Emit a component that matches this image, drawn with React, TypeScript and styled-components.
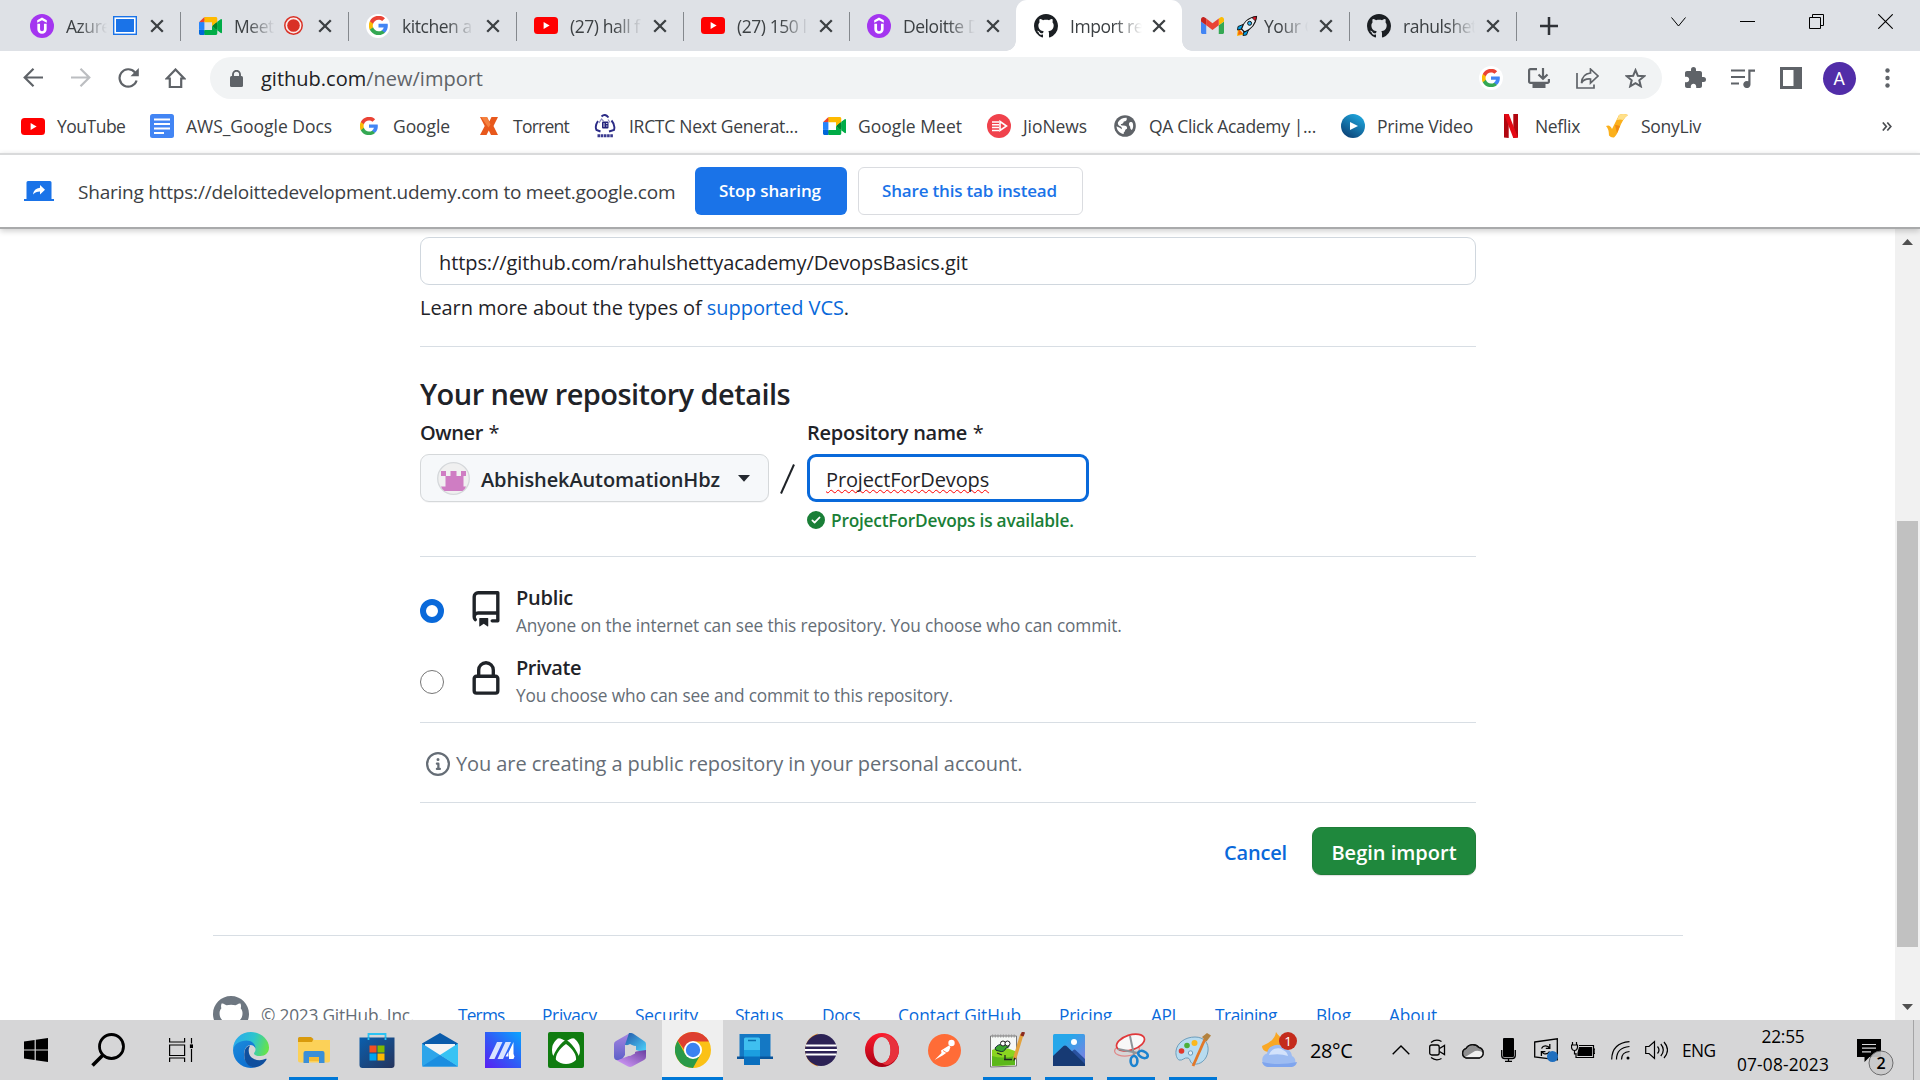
import React from "react";
import styled, { createGlobalStyle, css } from "styled-components";

const GlobalStyle = createGlobalStyle`
  *, *::before, *::after { box-sizing: border-box; }
  body {
    margin: 0;
    background: #fff;
    overflow: hidden;
    font-family: "Open Sans", "Noto Sans", sans-serif;
    color: #1f2328;
  }
  svg { display: block; flex: none; }
`;

/* ---------- shared ---------- */

const Screen = styled.div`
  width: 1920px;
  height: 1080px;
  display: flex;
  flex-direction: column;
  overflow: hidden;
`;

const Label = styled.span<{ $ls?: number }>`
  white-space: nowrap;
  letter-spacing: ${(p) => p.$ls ?? 0}px;
`;

/* ---------- brand glyphs ---------- */

type IconProps = { w?: number; h?: number };

const Udemy = ({ w = 24, h = 24 }: IconProps) => (
  <svg width={w} height={h} viewBox="0 0 24 24">
    <circle cx="12" cy="12" r="12" fill="#a435f0" />
    <path d="M7.200 6.300 12 3.500l4.800 2.800v2.500L12 6.200 7.200 8.800z" fill="#fff" />
    <path d="M8.700 9.800v5.400a3.300 3.300 0 0 0 6.600 0V9.800" fill="none" stroke="#fff" strokeWidth="2.700" />
  </svg>
);

const Meet = ({ w = 23, h = 18 }: IconProps) => (
  <svg width={w} height={h} viewBox="0 0 87.5 72" preserveAspectRatio="none">
    <path fill="#00832d" d="M49.5 36l8.53 9.75 11.47 7.33 2-17.02-2-16.64-11.69 6.44z" />
    <path fill="#0066da" d="M0 51.5V66c0 3.315 2.685 6 6 6h14.5l3-10.96-3-9.54-9.95-3z" />
    <path fill="#e94235" d="M20.5 0L0 20.5l10.55 3 9.95-3 2.95-9.41z" />
    <path fill="#2684fc" d="M20.5 20.5H0v31h20.5z" />
    <path fill="#00ac47" d="M82.6 8.68L69.5 19.42v33.66l13.16 10.79c1.97 1.54 4.85.135 4.85-2.37V11c0-2.535-2.945-3.925-4.91-2.32zM49.5 36v15.5h-29V72h43c3.315 0 6-2.685 6-6V53.08z" />
    <path fill="#ffba00" d="M63.5 0h-43v20.5h29V36l20-16.57V6c0-3.315-2.685-6-6-6z" />
  </svg>
);

const GoogleG = ({ w = 18 }: IconProps) => (
  <svg width={w} height={w} viewBox="0 0 48 48">
    <path fill="#4285f4" d="M47.5 24.5c0-1.600-.1-3.200-.4-4.700H24v9.100h13.200c-.6 3-2.300 5.500-4.900 7.200v6h7.900c4.600-4.300 7.300-10.500 7.300-17.600z" />
    <path fill="#34a853" d="M24 48.500c6.600 0 12.200-2.200 16.200-5.900l-7.900-6.100c-2.200 1.500-5 2.300-8.300 2.300-6.400 0-11.800-4.300-13.700-10.100H2.100v6.300C6.200 43.100 14.400 48.500 24 48.500z" />
    <path fill="#fbbc05" d="M10.300 28.700c-.5-1.500-.8-3-.8-4.700s.3-3.200.8-4.700V13H2.100C.5 16.300-.4 20.100-.4 24s.9 7.700 2.500 11z" />
    <path fill="#ea4335" d="M24 9.200c3.600 0 6.800 1.200 9.400 3.700l7-7C36.200 1.900 30.600-.5 24-.5 14.400-.5 6.200 4.900 2.100 13l8.200 6.300C12.200 13.500 17.600 9.200 24 9.200z" />
  </svg>
);

const YouTube = () => (
  <svg width="24" height="17" viewBox="0 0 24 17">
    <rect width="24" height="17" rx="3.500" fill="#f00" />
    <path d="M9.600 5v7l6-3.500z" fill="#fff" />
  </svg>
);

const octocat =
  "M8 0c4.420 0 8 3.580 8 8a8.013 8.013 0 0 1-5.450 7.590c-.4.08-.55-.17-.55-.38 0-.27.01-1.130.01-2.200 0-.75-.25-1.230-.54-1.480 1.780-.2 3.650-.88 3.650-3.950 0-.88-.31-1.590-.82-2.150.08-.2.36-1.020-.08-2.120 0 0-.67-.22-2.200.82-.64-.18-1.320-.27-2-.27-.68 0-1.360.09-2 .27-1.530-1.030-2.200-.82-2.200-.82-.44 1.100-.16 1.920-.08 2.120-.51.56-.82 1.280-.82 2.150 0 3.060 1.860 3.750 3.640 3.950-.23.2-.44.55-.51 1.070-.46.21-1.610.55-2.330-.66-.15-.24-.6-.83-1.230-.82-.67.01-.27.38.01.53.34.19.73.9.82 1.130.16.45.68 1.310 2.690.94 0 .67.01 1.300.01 1.490 0 .21-.15.45-.55.38A7.995 7.995 0 0 1 0 8c0-4.420 3.580-8 8-8Z";

const GitHub = ({ w = 24, color = "#1b1f23" }: { w?: number; color?: string }) => (
  <svg width={w} height={w} viewBox="0 0 16 16">
    <path fill={color} d={octocat} />
  </svg>
);

const Gmail = () => (
  <svg width="23" height="17" viewBox="52 42 88 66" preserveAspectRatio="none">
    <path fill="#4285f4" d="M58 108h14V74L52 59v43c0 3.320 2.690 6 6 6" />
    <path fill="#34a853" d="M120 108h14c3.320 0 6-2.690 6-6V59l-20 15" />
    <path fill="#fbbc04" d="M120 48v26l20-15v-8c0-7.420-8.470-11.650-14.400-7.200" />
    <path fill="#ea4335" d="M72 74V48l24 18 24-18v26L96 92" />
    <path fill="#c5221f" d="M52 51v8l20 15V48l-5.600-4.200c-5.940-4.450-14.400-.22-14.400 7.200" />
  </svg>
);

const Rocket = () => (
  <svg width="22" height="22" viewBox="0 0 22 22">
    <path d="M2 13.500 1 21l7-1.500z" fill="#ffb900" />
    <path d="M3 14l-1 6 5-1.500z" fill="#f7630c" />
    <path d="M7 9.500 2 11.500 1.500 15l4.500-1z M12.500 15l-2 5-3.500.5 1-4.500z" fill="#00a2e8" stroke="#111" strokeWidth=".9" />
    <path d="M5.500 14C7 8 12 2.500 20.500 1.500 19.800 9 14.500 14.500 8.500 17z" fill="#e8eef2" stroke="#111" strokeWidth="1.100" />
    <path d="M16 2.600c1.500-.7 3-1 4.500-1.100-.1 1.600-.5 3.100-1.100 4.500z" fill="#e81224" stroke="#111" strokeWidth=".8" />
    <circle cx="13.600" cy="8.300" r="2" fill="#29b6f6" stroke="#111" />
  </svg>
);

/* ---------- tab strip ---------- */

const TabStrip = styled.div`
  height: 51px;
  flex: none;
  display: flex;
  background: #dee1e6;
  padding-left: 12px;
`;

const TabBox = styled.div<{ $w: number; $active?: boolean; $line?: boolean }>`
  position: relative;
  width: ${(p) => p.$w}px;
  height: 51px;
  flex: none;
  display: flex;
  align-items: center;
  padding-left: 18px;
  ${(p) =>
    p.$line &&
    css`
      &::after {
        content: "";
        position: absolute;
        right: -1px;
        top: 12px;
        width: 1.500px;
        height: 29px;
        background: #84888d;
      }
    `}
  ${(p) =>
    p.$active &&
    css`
      background: #fff;
      border-radius: 11px 11px 0 0;
      &::before,
      &::after {
        content: "";
        position: absolute;
        bottom: 0;
        width: 10px;
        height: 10px;
      }
      &::before {
        left: -10px;
        background: radial-gradient(circle at 0 0, transparent 9.500px, #fff 10px);
      }
      &::after {
        right: -10px;
        background: radial-gradient(circle at 100% 0, transparent 9.500px, #fff 10px);
      }
    `}
`;

const Favicon = styled.div<{ $white?: boolean }>`
  width: 24px;
  height: 24px;
  flex: none;
  display: flex;
  align-items: center;
  justify-content: center;
  border-radius: 50%;
  background: ${(p) => (p.$white ? "#fff" : "transparent")};
`;

const TabTitle = styled.div<{ $w: number }>`
  width: ${(p) => p.$w}px;
  margin-left: 12px;
  height: 30px;
  line-height: 28px;
  display: flex;
  align-items: center;
  gap: 6px;
  overflow: hidden;
  white-space: nowrap;
  font-size: 17.500px;
  letter-spacing: -0.450px;
  color: #3c4043;
  mask-image: linear-gradient(90deg, #000 calc(100% - 28px), transparent);
`;

const TabMark = styled.div`
  width: 24px;
  margin-left: 6px;
  display: flex;
  justify-content: center;
`;

const TabClose = styled.div`
  flex: 1;
  display: flex;
  justify-content: flex-end;
  padding-right: 16px;
`;

const Cross = () => (
  <svg width="14" height="14" viewBox="0 0 14 14">
    <path d="M1.200 1.200 12.800 12.800M12.800 1.200 1.200 12.800" stroke="#3c4043" strokeWidth="2.300" />
  </svg>
);

const SharingMark = () => (
  <svg width="24" height="19" viewBox="0 0 24 19">
    <rect x=".7" y=".7" width="22.600" height="17.600" fill="#fff" stroke="#1a73e8" strokeWidth="1.400" />
    <rect x="3" y="3" width="18" height="13" fill="#1a73e8" />
  </svg>
);

const RecordMark = () => (
  <svg width="19" height="19" viewBox="0 0 19 19">
    <circle cx="9.500" cy="9.500" r="8.700" fill="#fbe9e7" stroke="#d93025" strokeWidth="1.500" />
    <circle cx="9.500" cy="9.500" r="6.300" fill="#d93025" />
  </svg>
);

type TabData = {
  w: number;
  icon: React.ReactNode;
  title: React.ReactNode;
  mark?: React.ReactNode;
  active?: boolean;
  line?: boolean;
  white?: boolean;
};

const tabs: TabData[] = [
  { w: 168, icon: <Udemy />, title: "Azure", mark: <SharingMark />, line: true },
  { w: 168, icon: <Meet />, title: "Meet", mark: <RecordMark />, line: true },
  { w: 168, icon: <GoogleG w={19} />, title: "kitchen a", line: true, white: true },
  { w: 167, icon: <YouTube />, title: "(27) hall f", line: true },
  { w: 166, icon: <YouTube />, title: "(27) 150 l", line: true },
  { w: 167, icon: <Udemy />, title: "Deloitte D" },
  { w: 166, icon: <GitHub />, title: "Import re", active: true },
  { w: 167, icon: <Gmail />, title: <><Rocket /> Your G</>, line: true },
  { w: 167, icon: <GitHub />, title: "rahulshet", line: true },
];

const NewTab = styled.div`
  width: 66px;
  display: flex;
  align-items: center;
  justify-content: center;
`;

const WindowControls = styled.div`
  margin-left: auto;
  height: 43px;
  display: flex;
  align-items: center;
`;

const WindowButton = styled.div`
  width: 69px;
  display: flex;
  justify-content: center;
`;

/* ---------- toolbar ---------- */

const Toolbar = styled.div`
  height: 54px;
  flex: none;
  display: flex;
  align-items: center;
  background: #fff;
`;

const NavButtons = styled.div`
  width: 210px;
  display: flex;
  padding-left: 9px;
`;

const NavButton = styled.div`
  width: 47.700px;
  display: flex;
  justify-content: center;
`;

const Omnibox = styled.div`
  width: 1452px;
  height: 42px;
  border-radius: 21px;
  background: #f1f3f4;
  display: flex;
  align-items: center;
  padding: 0 3px 0 20px;
  font-size: 20px;
  color: #5f6368;
`;

const Address = styled.div`
  flex: 1;
  margin-left: 18px;
  padding-top: 1px;
  line-height: 41px;
  b { font-weight: 400; color: #202124; }
`;

const ToolSlot = styled.div`
  width: 48px;
  display: flex;
  justify-content: center;
`;

const Avatar = styled.div`
  width: 33px;
  height: 33px;
  border-radius: 50%;
  background: #512da8;
  color: #fff;
  font: 400 18px/34px Roboto, sans-serif;
  text-align: center;
`;

const ToolEnd = styled.div`
  display: flex;
  align-items: center;
  padding-left: 9px;
`;

/* ---------- bookmarks ---------- */

const Bookmarks = styled.div`
  height: 48px;
  flex: none;
  display: flex;
  align-items: flex-start;
  padding: 9px 0 0 21px;
  color: #3c4043;
  font-size: 17.500px;
  line-height: 24px;
`;

const Bookmark = styled.div<{ $w: number }>`
  width: ${(p) => p.$w}px;
  height: 24px;
  flex: none;
  display: flex;
  align-items: center;
  line-height: 24px;
`;

const BookmarkIcon = styled.div`
  width: 24px;
  margin-right: 12px;
  display: flex;
  justify-content: center;
`;

const Docs = () => (
  <svg width="24" height="24" viewBox="0 0 24 24">
    <rect width="24" height="24" rx="2.500" fill="#4285f4" />
    <path d="M4 5.500h16M4 10h16M4 14.500h16M4 19h10" stroke="#fff" strokeWidth="2" />
  </svg>
);

const TorrentX = () => (
  <svg width="18" height="18" viewBox="0 0 18 18">
    <path d="M0 0h7l2.300 4.500L11.500 0H18l-4.500 9L18 18h-7l-2.200-4.500L6.500 18H0l4.700-9z" fill="#e8581c" />
    <path d="M1 0h6l3.500 7.500-2 3z" fill="#f4803e" />
  </svg>
);

const Irctc = () => (
  <svg width="22" height="24" viewBox="0 0 22 24">
    <path d="M7.500 2.500Q11-1 14.500 3.500M4 7Q.5 12 2.500 16l4 1.500M17.500 6.500q4 4.500 2.500 9.500l-5 1.500" fill="none" stroke="#2b2b86" strokeWidth="1.900" />
    <path d="M5 9l2.500-4 2 2M16 8.500l-2-3" fill="none" stroke="#8c8cc0" strokeWidth="1.200" />
    <rect x="8" y="7.500" width="6.500" height="7" rx="1" fill="#23237c" />
    <path d="M10 9v4M12 9.500h1.500M12 12h1.500" stroke="#fff" strokeWidth=".8" />
    <path d="M3.500 21.800h16" stroke="#3b3b90" strokeWidth="3" strokeDasharray="2.600 .6" />
  </svg>
);

const JioNews = () => (
  <svg width="24" height="24" viewBox="0 0 24 24">
    <circle cx="12" cy="12" r="12" fill="#f0424c" />
    <path d="M5 8h7M5 10.800h7M5 13.600h7M5 16.400h7" stroke="#fff" strokeWidth="1.500" />
    <path d="M13 7.500 19.500 12 13 16.500z" fill="none" stroke="#fff" strokeWidth="1.600" />
  </svg>
);

const Globe = () => (
  <svg width="22" height="22" viewBox="0 0 22 22">
    <circle cx="11" cy="11" r="10.800" fill="#5f6368" />
    <path d="M4 7.200C6 4 9 2.600 12.600 2.700c.8 2.200-.6 3.600-2.800 3.800-.4 1.800-1.500 2.600-3 2.600 0 1.700 1.400 1.500 4.400 1.600 1.900.3 2 1.800 1.800 3-1.600.6-2 1.400-2.200 2.900-1 .4-1.300 1.300-1 2.500C5.500 18.300 2.600 15 2.600 11.200c1.800 1 3.600 1.200 5 3 .8-1.500-.4-2.700-2-3.300C4 10 3.600 8.500 4 7.200z" fill="#fff" />
    <path d="M15.500 7.500c1.500-.6 2.500-.6 3.200.4.800 2.700.6 5-.8 7.100-1.200-.8-2-1.800-1.700-3.300-1.400-1.200-1.700-2.800-.7-4.200z" fill="#fff" />
  </svg>
);

const Prime = () => (
  <svg width="24" height="24" viewBox="0 0 24 24">
    <defs>
      <linearGradient id="prime" x1="0.800" y1="0" x2="0.200" y2="1">
        <stop offset="0" stopColor="#1fa9e0" />
        <stop offset="1" stopColor="#0b3f73" />
      </linearGradient>
    </defs>
    <circle cx="12" cy="12" r="12" fill="url(#prime)" />
    <path d="M9 8v8l8-4z" fill="#fff" />
  </svg>
);

const Netflix = () => (
  <svg width="14" height="24" viewBox="0 0 14 24">
    <path d="M0 0h4.700v24L0 23.500zM9.300 0H14v23.500l-4.700.5z" fill="#b1060f" />
    <path d="M0 0h4.700L14 23.500 9.300 24z" fill="#e50914" />
  </svg>
);

const SonyLiv = () => (
  <svg width="22" height="24" viewBox="0 0 22 24">
    <path d="M0 12q4-2 6 3L13 1q4-2 9 0-5 3-9 14-2 6-5 8.500-3 .5-5-2Q3 15 0 12z" fill="#fbb01c" />
    <path d="M13 1q4-2 9 0-3 2-5 5-3-1-6 0z" fill="#ffe08a" />
    <path d="M9 11q2 0 5 1l-3 7z" fill="#f08a12" />
  </svg>
);

const bookmarks: { w: number; icon: React.ReactNode; text: string; ls: number }[] = [
  { w: 129, icon: <YouTube />, text: "YouTube", ls: -0.5 },
  { w: 207, icon: <Docs />, text: "AWS_Google Docs", ls: -0.03 },
  { w: 120, icon: <GoogleG w={18} />, text: "Google", ls: -0.09 },
  { w: 116, icon: <TorrentX />, text: "Torrent", ls: -0.75 },
  { w: 229, icon: <Irctc />, text: "IRCTC Next Generat...", ls: -0.28 },
  { w: 165, icon: <Meet />, text: "Google Meet", ls: 0.03 },
  { w: 126, icon: <JioNews />, text: "JioNews", ls: -0.08 },
  { w: 228, icon: <Globe />, text: "QA Click Academy |...", ls: -0.33 },
  { w: 158, icon: <Prime />, text: "Prime Video", ls: -0.24 },
  { w: 106, icon: <Netflix />, text: "Neflix", ls: -0.32 },
  { w: 260, icon: <SonyLiv />, text: "SonyLiv", ls: -0.27 },
];

const Overflow = styled.div`
  width: 44px;
  height: 24px;
  display: flex;
  align-items: center;
  justify-content: center;
`;

/* ---------- sharing bar ---------- */

const ShareBar = styled.div`
  position: relative;
  height: 76px;
  flex: none;
  display: flex;
  align-items: center;
  border-top: 2px solid #d9dadb;
  border-bottom: 2px solid #a9aaab;
  padding: 0 0 1px 24px;
  background: #fff;
  box-shadow: 0 2px 6px rgba(0, 0, 0, 0.2);
  z-index: 1;
`;

const ShareText = styled.div`
  width: 617px;
  margin-left: 24px;
  padding-top: 2px;
  font-size: 19px;
  color: #3c4043;
`;

const ShareButton = styled.button<{ $w: number; $solid?: boolean }>`
  width: ${(p) => p.$w}px;
  height: 48px;
  margin-right: 11px;
  padding: 0 2px 0 0;
  border-radius: 6px;
  font: 600 17px "Open Sans", sans-serif;
  border: ${(p) => (p.$solid ? "0" : "1px solid #dadce0")};
  background: ${(p) => (p.$solid ? "#1a73e8" : "#fff")};
  color: ${(p) => (p.$solid ? "#fff" : "#1a73e8")};
`;

/* ---------- page ---------- */

const Viewport = styled.div`
  height: 791px;
  flex: none;
  display: flex;
  overflow: hidden;
`;

const Page = styled.main`
  flex: 1;
  overflow: hidden;
`;

const Form = styled.div`
  width: 1056px;
  margin-left: 420px;
  padding-top: 8px;
  font-size: 20px;
  line-height: 30px;
`;

const Section = styled.div<{ $h: number; $top: number }>`
  height: ${(p) => p.$h}px;
  padding-top: ${(p) => p.$top}px;
  border-bottom: 1.500px solid #d8dee4;
`;

const Field = styled.div<{ $w: number; $focus?: boolean }>`
  width: ${(p) => p.$w}px;
  height: 48px;
  border-radius: 9px;
  border: ${(p) => (p.$focus ? "3px solid #0969da" : "1.500px solid #d0d7de")};
  padding: 0 ${(p) => (p.$focus ? 16 : 18)}px;
  line-height: ${(p) => (p.$focus ? 45 : 49)}px;
`;

const Misspelled = styled(Label)`
  text-decoration: underline wavy #f00 1.300px;
  text-underline-offset: 2px;
  text-decoration-skip-ink: none;
`;

const Link = styled.a`
  color: #0969da;
`;

const Heading = styled.h2`
  margin: 0;
  height: 40px;
  font-size: 29px;
  line-height: 38px;
  font-weight: 600;
`;

const FieldRow = styled.div`
  display: flex;
  align-items: flex-start;
`;

const FieldGroup = styled.div<{ $w: number }>`
  width: ${(p) => p.$w}px;
`;

const FieldLabel = styled.div`
  height: 39px;
  padding-top: 3px;
  font-weight: 600;
`;

const Star = styled.span`
  font-weight: 400;
  letter-spacing: 0.500px;
`;

const OwnerButton = styled.button`
  width: 349px;
  height: 48px;
  padding: 0 16px;
  display: flex;
  align-items: center;
  border: 1.500px solid #d5d8da;
  border-radius: 9px;
  background: #f6f8fa;
  box-shadow: 0 1px 0 rgba(31, 35, 40, 0.04);
  font: 600 20px "Open Sans", sans-serif;
  color: #24292f;
`;

const OwnerName = styled.span`
  width: 257px;
  margin-left: 11px;
  padding-top: 2px;
  text-align: left;
  letter-spacing: -0.120px;
  white-space: nowrap;
`;

const Slash = styled.div`
  width: 38px;
  padding: 49px 0 0 11px;
`;

const Available = styled.div`
  height: 36px;
  display: flex;
  align-items: center;
  gap: 6px;
  line-height: 32px;
  font-size: 17.300px;
  font-weight: 600;
  color: #1a7f37;
  span { padding-top: 2px; }
`;

const Option = styled.div<{ $h: number }>`
  height: ${(p) => p.$h}px;
  display: flex;
  align-items: flex-start;
`;

const Radio = styled.div<{ $on?: boolean }>`
  width: 24px;
  height: 24px;
  margin: 14px 24px 0 0;
  border-radius: 50%;
  border: ${(p) => (p.$on ? "6px solid #0969da" : "1.500px solid #767676")};
  background: #fff;
`;

const OptionIcon = styled.div<{ $top: number }>`
  padding-top: ${(p) => p.$top}px;
`;

const OptionText = styled.div<{ $up: number }>`
  margin-left: 12px;
  margin-top: -${(p) => p.$up}px;
`;

const OptionName = styled.div`
  height: 28px;
  line-height: 28px;
  font-weight: 600;
`;

const OptionNote = styled.div`
  font-size: 17.300px;
  line-height: 27px;
  color: #656d76;
`;

const Notice = styled.div`
  display: flex;
  align-items: center;
  gap: 6px;
  height: 36px;
  padding-left: 6px;
  color: #656d76;
`;

const Actions = styled.div`
  height: 132px;
  padding-top: 24px;
  display: flex;
  justify-content: flex-end;
  font-weight: 600;
`;

const Cancel = styled(Link)`
  margin-right: 25px;
  line-height: 51px;
`;

const Submit = styled.button`
  width: 164px;
  height: 48px;
  padding: 2px 0 0;
  border: 1.500px solid #1f7d38;
  border-radius: 9px;
  background: #1f883d;
  box-shadow: 0 1px 1px rgba(31, 35, 40, 0.15);
  color: #fff;
  font: 600 20px "Open Sans", sans-serif;
`;

const Footer = styled.footer`
  width: 1470px;
  margin-left: 213px;
  border-top: 1.500px solid #d8dee4;
  padding-top: 60px;
  display: flex;
  align-items: flex-start;
  font-size: 17.300px;
  line-height: 40px;
  color: #656d76;
`;

const Copyright = styled.div`
  width: 197px;
  margin-left: 12px;
`;

const FooterLink = styled(Link)<{ $w: number }>`
  width: ${(p) => p.$w}px;
  white-space: nowrap;
`;

const footerLinks: [string, number, number][] = [
  ["Terms", 84, -0.8],
  ["Privacy", 93, -0.29],
  ["Security", 100, -0.16],
  ["Status", 87, -0.37],
  ["Docs", 76, -0.36],
  ["Contact GitHub", 161, -0.04],
  ["Pricing", 92, -0.21],
  ["API", 64, -0.39],
  ["Training", 101, -0.44],
  ["Blog", 73, -0.08],
  ["About", 60, -0.13],
];

const Scrollbar = styled.div`
  width: 25px;
  flex: none;
  background: #f1f1f1;
  display: flex;
  flex-direction: column;
  align-items: center;
`;

const ScrollArrow = styled.div<{ $down?: boolean }>`
  height: 26px;
  display: flex;
  align-items: center;
  transform: ${(p) => (p.$down ? "rotate(180deg)" : "none")};
`;

const ScrollTrack = styled.div`
  flex: 1;
  padding-top: 266px;
`;

const ScrollThumb = styled.div`
  width: 21px;
  height: 426px;
  background: #c1c1c1;
`;

/* ---------- taskbar ---------- */

const Taskbar = styled.div`
  height: 60px;
  flex: none;
  display: flex;
  background: #d6d6d7;
  color: #000;
`;

const TaskSlot = styled.div<{ $w: number; $bar?: number; $active?: boolean }>`
  width: ${(p) => p.$w}px;
  height: 60px;
  flex: none;
  display: flex;
  align-items: center;
  justify-content: center;
  background: ${(p) =>
    p.$active
      ? "linear-gradient(#0078d7,#0078d7) bottom/100% 3px no-repeat, #efefef"
      : p.$bar
      ? `linear-gradient(#0078d7,#0078d7) bottom/${p.$bar}px 3px no-repeat`
      : "none"};
`;

const Tray = styled.div`
  margin-left: auto;
  display: flex;
  align-items: center;
`;

const TraySlot = styled.div<{ $w: number; $top?: number }>`
  width: ${(p) => p.$w}px;
  padding-top: ${(p) => p.$top ?? 0}px;
  flex: none;
  display: flex;
  justify-content: center;
`;

const Temperature = styled.div`
  width: 72px;
  padding: 2px 0 0 12px;
  font-size: 20px;
  line-height: 60px;
`;

const Language = styled.div`
  width: 55px;
  padding-left: 9px;
  font-size: 17.300px;
`;

const Clock = styled.div`
  width: 110px;
  font-size: 17.300px;
  line-height: 28px;
  text-align: center;
  padding-top: 1px;
`;

const ShowDesktop = styled.div`
  width: 7px;
  height: 60px;
  border-left: 1.500px solid #a5a5a6;
`;

const Windows = () => (
  <svg width="24" height="24" viewBox="0 0 24 24">
    <path d="M0 3.400 10.600 2v9.400H0zM11.800 1.800 24 0v11.400H11.800zM0 12.600h10.600V22L0 20.600zM11.800 12.600H24V24l-12.200-1.800z" />
  </svg>
);

const Search = () => (
  <svg width="34" height="34" viewBox="0 0 34 34" fill="none" stroke="#000">
    <circle cx="20.500" cy="13.500" r="12" strokeWidth="2.800" />
    <path d="M12 22 1.500 32.500" strokeWidth="3.600" />
  </svg>
);

const TaskView = () => (
  <svg width="24" height="24" viewBox="0 0 24 24" fill="none" stroke="#000" strokeWidth="1.200">
    <path d="M.6 0v4h15V0M.6 24v-4h15v4M.6 7h15v10.500H.6zM22.500 0v5.500M22.500 11v13" />
    <rect x="21.500" y="7" width="2.500" height="2.500" fill="#000" />
  </svg>
);

const Edge = () => (
  <svg width="36" height="36" viewBox="0 0 36 36">
    <defs>
      <linearGradient id="edgeTop" x1="0" y1=".3" x2="1" y2=".5">
        <stop offset="0" stopColor="#2aa9ee" />
        <stop offset=".55" stopColor="#2dc5cd" />
        <stop offset="1" stopColor="#66e34a" />
      </linearGradient>
      <linearGradient id="edgeLeft" x1="0" y1="0" x2=".6" y2="1">
        <stop offset="0" stopColor="#1b8bdc" />
        <stop offset="1" stopColor="#0d6fd0" />
      </linearGradient>
    </defs>
    <path d="M0 18C0 7 8 0 18 0s18 7.500 18 15.500c0 5.500-4 8.500-8.500 8.500-4 0-6.500-1.200-6.500-2.600 0-.9 1.500-1.600 1.500-4C22.500 14 19 11 14 11 6 11 1 15 0 18z" fill="url(#edgeTop)" />
    <path d="M0 18c1-6 7-9.500 13.500-9.500 5 0 9 3.500 9 8-1-2.500-3-3.500-5-3.500-3.500 0-6.500 4-6.500 9.500C11 29 15.500 34.500 22 35.500 9.500 38 0 29 0 18z" fill="url(#edgeLeft)" />
    <path d="M11.500 20C10 29 15 35.500 22 35.400c5-.4 9.500-3.900 11.500-7.900.3-.7-.3-1-.8-.7-6 3.200-17 1.200-17-8.300 0-2 .5-3.500 1.500-5-3 .3-5.200 3-5.700 6.500z" fill="#0f4f9e" />
  </svg>
);

const Explorer = () => (
  <svg width="32" height="27" viewBox="0 0 32 27">
    <path d="M0 3h32v20.500a2 2 0 0 1-2 2H2a2 2 0 0 1-2-2z" fill="#fcd158" />
    <path d="M0 5V1.500A1.500 1.500 0 0 1 1.500 0H13l2.500 2-1.500 3z" fill="#d99a0c" />
    <path d="M5.500 26V16a2 2 0 0 1 2-2h17a2 2 0 0 1 2 2v10H21v-6H11v6z" fill="#3a8fd8" />
    <path d="M11 20h10v4H11z" fill="#f3bb35" />
  </svg>
);

const Store = () => (
  <svg width="36" height="36" viewBox="0 0 36 36">
    <defs>
      <linearGradient id="store" x1="0" y1="0" x2="1" y2="1">
        <stop offset="0" stopColor="#0a5fae" />
        <stop offset="1" stopColor="#26345c" />
      </linearGradient>
    </defs>
    <path d="M9.500 8V2h17v6" fill="none" stroke="#2cc3f3" strokeWidth="1.800" />
    <path d="M.5 5.500h35V33a3 3 0 0 1-3 3h-29a3 3 0 0 1-3-3z" fill="url(#store)" />
    <path d="M9.500 5.500V8M26.500 5.500V8" stroke="#2cc3f3" strokeWidth="1.800" />
    <path d="M10.500 13.500h7v7h-7z" fill="#f25022" />
    <path d="M18.500 13.500h7v7h-7z" fill="#7fba00" />
    <path d="M10.500 21.500h7v7h-7z" fill="#00a4ef" />
    <path d="M18.500 21.500h7v7h-7z" fill="#ffb900" />
  </svg>
);

const Mail = () => (
  <svg width="36" height="34" viewBox="0 0 36 34">
    <path d="M0 10.500 18 0l18 10.500v5H0z" fill="#0b5cab" />
    <path d="M3 11h30v6l-15 10L3 17z" fill="#f4f4f4" />
    <path d="M0 10.500 18 22l18 11.500H1.500A1.500 1.500 0 0 1 0 32z" fill="#2ea5ea" />
    <path d="M36 10.500V33.500L18 22z" fill="#37c3f4" />
    <path d="M0 33.500 18 22l18 11.500z" fill="#1b8ee0" />
  </svg>
);

const MyAsus = () => (
  <svg width="36" height="36" viewBox="0 0 36 36">
    <defs>
      <linearGradient id="asus" x1="0" y1="1" x2="1" y2="0">
        <stop offset="0" stopColor="#5a1ff2" />
        <stop offset=".5" stopColor="#2f5df6" />
        <stop offset="1" stopColor="#08a5ff" />
      </linearGradient>
    </defs>
    <path d="M0 0h36v36H0z" fill="url(#asus)" />
    <path d="M4 27 12 10h5.500L9.500 27zM12.500 27l8-17H26l-8 17z" fill="#d9e4ff" />
    <path d="M28.500 10v17H24v-7.500zM20.500 24.500l3-5v5z" fill="#fff" />
    <circle cx="27" cy="24.500" r="2.400" fill="#fff" />
  </svg>
);

const Xbox = () => (
  <svg width="36" height="36" viewBox="0 0 36 36">
    <rect width="36" height="36" rx="2" fill="#107c10" />
    <circle cx="18" cy="18" r="14" fill="#fff" />
    <path d="M9 6.500c3-.7 6 .8 9 3 3-2.200 6-3.700 9-3l-3.500-3h-11zM18 12c6.500 4.500 11 11 10 16.500l3.500-3C28.500 18.500 25 13.500 21 9.800L18 8l-3 1.800C11 13.500 7.500 18.500 4.500 25.500l3.500 3C7 23 11.500 16.500 18 12z" fill="#107c10" />
  </svg>
);

const M365 = () => (
  <svg width="32" height="34" viewBox="0 0 32 34">
    <defs>
      <linearGradient id="mA" x1="0" y1="0" x2="0" y2="1">
        <stop offset="0" stopColor="#a685e2" />
        <stop offset="1" stopColor="#5b5fc7" />
      </linearGradient>
      <linearGradient id="mB" x1="0" y1="0" x2="1" y2="1">
        <stop offset="0" stopColor="#2456a8" />
        <stop offset="1" stopColor="#4fd8ff" />
      </linearGradient>
      <linearGradient id="mC" x1="0" y1="1" x2="1" y2="0">
        <stop offset="0" stopColor="#d9a1ff" />
        <stop offset="1" stopColor="#6a3fa0" />
      </linearGradient>
    </defs>
    <path d="M16 0 2 8Q0 9 0 11v13q0 2 2 3l5 1 4-6V12l9-5z" fill="url(#mA)" />
    <path d="M15 0q2-.4 4 .6L30 8q2 1 2 3v9l-10-3v-4l-11-1z" fill="url(#mB)" />
    <path d="M32 17v7q0 2-2 3l-12 6.500q-2 .8-4 0L3 27.500l9-3.500 4-1.500 6-4z" fill="url(#mC)" />
    <path d="M11 13.500 16 11l5 2.500v7L16 23l-5-2.500z" fill="#d6d6d7" />
  </svg>
);

const Chrome = () => (
  <svg width="36" height="36" viewBox="0 0 36 36">
    <circle cx="18" cy="18" r="18" fill="#fbc116" />
    <path d="M18 9.500h15.900A18 18 0 0 0 2.600 8.700L9.500 18z" fill="#dd3f31" />
    <path d="M2.600 8.700A18 18 0 0 0 18 36l7.500-13.500-8 3.800-7-3.800z" fill="#2a9a49" />
    <circle cx="18" cy="18" r="9" fill="#fff" />
    <circle cx="18" cy="18" r="7.200" fill="#3b82f0" />
  </svg>
);

const YourPhone = () => (
  <svg width="36" height="32" viewBox="0 0 36 32">
    <path d="M2.500 0h31v23h-31z" fill="#1478c4" />
    <path d="M0 22.500h36V25H0z" fill="#0a559b" />
    <path d="M7 5a1.500 1.500 0 0 1 1.500-1.500h13A1.500 1.500 0 0 1 23 5v26H7z" fill="#3fc0f0" />
    <path d="M7 16h16v7H7z" fill="#1b9fe0" />
    <path d="M7 22.500h16V31H7z" fill="#0a6fbe" />
    <path d="M11 6.500h8" stroke="#0a6fae" strokeWidth="1.500" />
  </svg>
);

const Eclipse = () => (
  <svg width="36" height="34" viewBox="0 0 36 34">
    <path d="M17 .5A17 17 0 0 0 17 33.500L12 27V7z" fill="#f7941e" />
    <circle cx="20" cy="17" r="16" fill="#2c2255" />
    <path d="M4.500 12.500h31M4 17h32M4.500 21.500h31" stroke="#fff" strokeWidth="2" />
  </svg>
);

const Opera = () => (
  <svg width="34" height="34" viewBox="0 0 34 34">
    <defs>
      <linearGradient id="opera" x1="0" y1="0" x2="0" y2="1">
        <stop offset="0" stopColor="#ff1b2d" />
        <stop offset="1" stopColor="#a70014" />
      </linearGradient>
    </defs>
    <path fillRule="evenodd" d="M17 0a17 17 0 1 0 0 34 17 17 0 0 0 0-34zm0 4c5 0 8.500 5.500 8.500 13S22 30 17 30 8.500 24.500 8.500 17 12 4 17 4z" fill="url(#opera)" />
    <path d="M17 4c2.200-2 5-2.200 7-1.600C30 5.500 34 11 34 17s-4 11.500-10 14.600c-2 .6-4.800.4-7-1.600 5 0 8.500-5.500 8.500-13S22 4 17 4z" fill="#e8323c" />
  </svg>
);

const Postman = () => (
  <svg width="33" height="33" viewBox="0 0 33 33">
    <circle cx="16.500" cy="16.500" r="16.500" fill="#ff6c37" />
    <circle cx="23.500" cy="9" r="3.200" fill="#fff" />
    <path d="M21 11.500 13 16.500l.5 2.500L6.500 26l8-4.500 6.500-4.500 1.500-4z" fill="#fff" />
    <path d="M15 16.500l4 2.500" stroke="#ff6c37" strokeWidth=".8" />
  </svg>
);

const NotepadPP = () => (
  <svg width="36" height="36" viewBox="0 0 36 36">
    <path d="M1.500 4h26v30l-26 1z" fill="#f6f8f6" stroke="#777" />
    <path d="M3 4h23" stroke="#999" strokeWidth="3" strokeDasharray="1.200 1.500" />
    <path d="M3 18q10-5 23 1v14L3 34z" fill="#8ad420" />
    <path d="M3 24q10 3 23 0v9L3 34z" fill="#5cb81a" />
    <path d="M6 16q4-5 8-3 3-4 5-1 3 3-2 4-2 5-7 3-4 0-4-3z" fill="#3aa52c" stroke="#123" strokeWidth=".9" />
    <circle cx="14" cy="11.500" r="2.500" fill="#fff" stroke="#222" />
    <circle cx="18.500" cy="11.500" r="2.500" fill="#fff" stroke="#222" />
    <path d="M15 27.500h8M16 23v4.500M8 21l5 2" stroke="#222" strokeWidth="1.300" />
    <path d="M33 2 25.500 27" stroke="#e3a23c" strokeWidth="3.400" />
    <path d="M34.500 0 33 4" stroke="#8b2a1e" strokeWidth="3.400" />
    <path d="M25 25.500l-.5 4 2.500-3z" fill="#222" />
  </svg>
);

const Photos = () => (
  <svg width="32" height="32" viewBox="0 0 32 32">
    <defs>
      <linearGradient id="photos" x1="0" y1="0" x2="1" y2="1">
        <stop offset=".3" stopColor="#26a7ea" />
        <stop offset="1" stopColor="#8b7be0" />
      </linearGradient>
    </defs>
    <rect width="32" height="32" rx="1.500" fill="url(#photos)" />
    <path d="m14 22 6.500-6q1-1 2 0L32 25v7H14z" fill="#2a52a0" />
    <path d="m0 22 10.500-10q1.500-1 3 0L32 30v2H0z" fill="#173a74" />
    <circle cx="21" cy="8" r="3" fill="#fff" />
  </svg>
);

const Snip = () => (
  <svg width="36" height="36" viewBox="0 0 36 36" fill="none">
    <ellipse cx="14" cy="18" rx="12.500" ry="6" stroke="#e08a8a" strokeWidth="1.200" transform="rotate(-6 14 18)" />
    <ellipse cx="17.500" cy="10.500" rx="14.500" ry="7.500" fill="#f8f8f8" stroke="#e0383a" strokeWidth="1.700" transform="rotate(-18 17.500 10.500)" />
    <path d="M17 4l4 19M5 17l20 4" stroke="#8e9499" strokeWidth="2" />
    <ellipse cx="21" cy="29" rx="3.400" ry="5" stroke="#1b82cf" strokeWidth="2.600" />
    <ellipse cx="30" cy="22.500" rx="5" ry="3.200" stroke="#1b82cf" strokeWidth="2.600" transform="rotate(25 30 22.500)" />
  </svg>
);

const Paint = () => (
  <svg width="36" height="34" viewBox="0 0 36 34">
    <path d="M1 18C2 10 10 4 20 4c9 0 14 6 13 14-1 9-8 14-14 13-5-1-3-5-6-6-4-1-5 3-9 2-2-1-3.500-5-3-9z" fill="#b8dcf0" stroke="#6d9dbb" />
    <circle cx="6.500" cy="18" r="2.800" fill="#e2382c" />
    <circle cx="12" cy="12.500" r="2.800" fill="#4cb03a" />
    <circle cx="19.500" cy="10" r="3" fill="#fbb81c" />
    <circle cx="15.500" cy="20" r="2.200" fill="#e4eef4" stroke="#6d9dbb" />
    <path d="M30 6 18 33" stroke="#e2782a" strokeWidth="2.800" />
    <path d="M27 4l5-4 4 2.500-4.500 6z" fill="#b3823f" />
  </svg>
);

const apps: { w: number; icon: React.ReactNode; bar?: number; active?: boolean }[] = [
  { w: 63, icon: <Edge /> },
  { w: 63, icon: <Explorer />, bar: 49 },
  { w: 63, icon: <Store /> },
  { w: 63, icon: <Mail /> },
  { w: 63, icon: <MyAsus /> },
  { w: 63, icon: <Xbox /> },
  { w: 65, icon: <M365 /> },
  { w: 61, icon: <Chrome />, active: true },
  { w: 64, icon: <YourPhone /> },
  { w: 63, icon: <Eclipse /> },
  { w: 63, icon: <Opera /> },
  { w: 63, icon: <Postman /> },
  { w: 62, icon: <NotepadPP />, bar: 48 },
  { w: 62, icon: <Photos />, bar: 48 },
  { w: 62, icon: <Snip />, bar: 48 },
  { w: 62, icon: <Paint />, bar: 48 },
];

const Weather = () => (
  <svg width="37" height="36" viewBox="0 0 37 36">
    <path d="M15 0q-1 9-14 14 0 5 6 6l10-3 6-10q-5-2-8-7z" fill="#f9a825" />
    <path d="M7 35a7 7 0 0 1-1-13.500A10 10 0 0 1 24 17a8 8 0 0 1 7 7 6 6 0 0 1-.5 11z" fill="#9dbcf2" />
    <path d="M7 35a7 7 0 0 1-6-5q17 4 35 0-1 4.500-5.500 5z" fill="#7fa5ee" />
    <path d="M8 23a9 9 0 0 1 14-5 8 8 0 0 1 5 6q-8-3-19-1z" fill="#d3e2fb" />
    <circle cx="27" cy="9" r="9" fill="#c42b1c" />
    <text x="27" y="14" fontSize="13.500" fill="#fff" textAnchor="middle" fontFamily="Open Sans">1</text>
  </svg>
);

const trayIcons: [number, React.ReactNode][] = [
  [
    38,
    <svg width="18" height="10" viewBox="0 0 18 10">
      <path d="M.7 9.300 9 1l8.300 8.300" fill="none" stroke="#000" strokeWidth="1.400" />
    </svg>,
  ],
  [
    34,
    <svg width="17" height="22" viewBox="0 0 17 22" fill="none" stroke="#000" strokeWidth="1.300">
      <rect x=".7" y="6" width="9.500" height="10" rx="2" />
      <path d="m10.500 9.500 5-3v9l-5-3M2 3.500Q7-.5 12.500 2.500M2 18.500q5 4 10.500 1" />
    </svg>,
  ],
  [
    37,
    <svg width="24" height="17" viewBox="0 0 24 17">
      <path d="M5 16a5 5 0 0 1 0-9.500A8 8 0 0 1 18 5.500 5.500 5.500 0 0 1 18.500 16z" fill="#8f8f90" stroke="#111" strokeWidth="1.200" />
      <path d="M3.500 15.500 14 9q5-1 8 2-.5 4-4 4.500z" fill="#efefef" />
      <path d="M5 16a5 5 0 0 1 0-9.500A8 8 0 0 1 18 5.500 5.500 5.500 0 0 1 18.500 16z" fill="none" stroke="#111" strokeWidth="1.300" />
    </svg>,
  ],
  [
    35,
    <svg width="15" height="24" viewBox="0 0 15 24">
      <rect x="2" y="0" width="11" height="19" rx="1" />
      <path d="M.7 12v5.500q0 3 3 3h7.600q3 0 3-3V12M7.500 20.500v3M4 23.300h7" fill="none" stroke="#000" strokeWidth="1.300" />
    </svg>,
  ],
  [
    39,
    <svg width="24" height="24" viewBox="0 0 24 24" fill="none" stroke="#000" strokeWidth="1.300">
      <path d="M.7 4 23.300.8v21L.7 19z" />
      <path d="M7.500 10.500q2-4 6.500-2l1.500 1.500M15.800 6v4.300h-4M15.500 13.500q-2 3.500-6 2l-1.800-1.700M7.400 18v-4.300h4" />
      <circle cx="18.500" cy="18.500" r="5.500" fill="#1f6fbf" stroke="none" />
    </svg>,
  ],
  [
    36,
    <svg width="24" height="17" viewBox="0 0 24 17" fill="none" stroke="#000" strokeWidth="1.200">
      <path d="M8 3.500h14.500v12H5V11" />
      <path d="M8.500 5.500h12v8H7V11z" fill="#000" />
      <path d="M22.500 7H24v4.500h-1.500zM1.500 0v3M5.500 0v3M.5 3h6v2.500q-.5 3-3 3t-3-3zM3.500 8.500v3.500H5" />
    </svg>,
  ],
  [
    38,
    <svg width="19" height="19" viewBox="0 0 19 19" fill="none" stroke="#000" strokeWidth="1.200">
      <path d="M.7 18.500Q1 2 18.500.7M5.500 18.500q0-12 13-13M10.500 18.500q0-7.500 8-8" />
      <circle cx="17" cy="17" r="1.500" fill="#000" stroke="none" />
    </svg>,
  ],
  [
    34,
    <svg width="23" height="20" viewBox="0 0 23 20" fill="none" stroke="#000" strokeWidth="1.200">
      <path d="M.7 6.500H4l5.500-5v17L4 13.500H.7zM12.500 6.500q3 3.500 0 7M15.800 4q5 6 0 12M19 2q7 8 0 16" />
    </svg>,
  ],
];

const Notifications = () => (
  <svg width="37" height="38" viewBox="0 0 37 38">
    <path d="M0 1h24v18H12.500l-5 5v-5H0z" />
    <path d="M5 6.500h14M5 10.200h14M5 13.900h9" stroke="#d6d6d7" strokeWidth="1.200" />
    <circle cx="24" cy="25" r="12" fill="#c9c9ca" fillOpacity=".92" stroke="#6e6e6f" />
    <text x="24" y="31" fontSize="16" fontWeight="600" textAnchor="middle" fontFamily="Open Sans">2</text>
  </svg>
);

/* ---------- page icons ---------- */

const RepoIcon = () => (
  <svg width="36" height="36" viewBox="0 0 16 16" fill="#1f2328">
    <path d="M2 2.500A2.500 2.500 0 0 1 4.500 0h8.750a.75.75 0 0 1 .75.75v12.500a.75.75 0 0 1-.75.75h-2.500a.75.75 0 0 1 0-1.500h1.750v-2h-8a1 1 0 0 0-.714 1.700.75.75 0 1 1-1.072 1.050A2.495 2.495 0 0 1 2 11.500Zm10.500-1h-8a1 1 0 0 0-1 1v6.708A2.486 2.486 0 0 1 4.500 9h8ZM5 12.250a.25.25 0 0 1 .25-.25h3.500a.25.25 0 0 1 .25.25v3.250a.25.25 0 0 1-.4.2l-1.450-1.087a.249.249 0 0 0-.3 0L5.400 15.700a.25.25 0 0 1-.4-.2Z" />
  </svg>
);

const LockIcon = () => (
  <svg width="36" height="36" viewBox="0 0 16 16" fill="#1f2328">
    <path d="M4 4a4 4 0 0 1 8 0v2h.25c.966 0 1.750.784 1.750 1.750v5.500A1.750 1.750 0 0 1 12.250 15h-8.500A1.750 1.750 0 0 1 2 13.250v-5.500C2 6.784 2.784 6 3.750 6H4Zm8.250 3.500h-8.500a.25.25 0 0 0-.25.25v5.500c0 .138.112.25.25.25h8.500a.25.25 0 0 0 .25-.25v-5.500a.25.25 0 0 0-.25-.25ZM10.500 6V4a2.500 2.500 0 1 0-5 0v2Z" />
  </svg>
);

const InfoIcon = () => (
  <svg width="24" height="24" viewBox="0 0 16 16" fill="#656d76">
    <path d="M0 8a8 8 0 1 1 16 0A8 8 0 0 1 0 8Zm8-6.500a6.500 6.500 0 1 0 0 13 6.500 6.500 0 0 0 0-13ZM6.500 7.750A.75.75 0 0 1 7.250 7h1a.75.75 0 0 1 .75.75v2.750h.25a.75.75 0 0 1 0 1.500h-2a.75.75 0 0 1 0-1.500h.25v-2h-.25a.75.75 0 0 1-.75-.75ZM8 6a1 1 0 1 1 0-2 1 1 0 0 1 0 2Z" />
  </svg>
);

const CheckIcon = () => (
  <svg width="18" height="18" viewBox="0 0 16 16" fill="#1a7f37">
    <path d="M8 16A8 8 0 1 1 8 0a8 8 0 0 1 0 16Zm3.780-9.720a.751.751 0 0 0-.018-1.042.751.751 0 0 0-1.042-.018L6.750 9.190 5.280 7.720a.751.751 0 0 0-1.042.018.751.751 0 0 0-.018 1.042l2 2a.75.75 0 0 0 1.060 0Z" />
  </svg>
);

const Identicon = () => (
  <svg width="33" height="33" viewBox="0 0 33 33">
    <circle cx="16.500" cy="16.500" r="15.800" fill="#f0f0f0" stroke="#d5d8db" strokeWidth="1.300" />
    <path d="M4 9h5v5h4.500V9h6v5H24V9h5v5h-2.500v10.500H29q-1 3-3.500 4.500h-18Q5 27.500 4 24.500h4.500V14H4z" fill="#cf7dc3" />
  </svg>
);

const stroke = { fill: "none", stroke: "#5f6368", strokeWidth: 2.2 } as const;

export default function App() {
  return (
    <Screen>
      <GlobalStyle />
      <TabStrip>
        {tabs.map((t, i) => (
          <TabBox key={i} $w={t.w} $active={t.active} $line={t.line}>
            <Favicon $white={t.white}>{t.icon}</Favicon>
            <TabTitle $w={t.mark ? 41 : 72}>{t.title}</TabTitle>
            {t.mark && <TabMark>{t.mark}</TabMark>}
            <TabClose><Cross /></TabClose>
          </TabBox>
        ))}
        <NewTab>
          <svg width="18" height="18" viewBox="0 0 18 18">
            <path d="M9 0v18M0 9h18" stroke="#2f3237" strokeWidth="2.500" />
          </svg>
        </NewTab>
        <WindowControls>
          <WindowButton>
            <svg width="15" height="10" viewBox="0 0 15 10"><path d="M.5.5l7 8.500 7-8.500" fill="none" stroke="#000" /></svg>
          </WindowButton>
          <WindowButton>
            <svg width="15" height="1" viewBox="0 0 15 1"><path d="M0 0h15v1H0z" /></svg>
          </WindowButton>
          <WindowButton>
            <svg width="15" height="15" viewBox="0 0 15 15" fill="none" stroke="#000">
              <path d="M.5 3.500h11v11H.5zM3.500 3.500v-3h11v11h-3" />
            </svg>
          </WindowButton>
          <WindowButton>
            <svg width="15" height="15" viewBox="0 0 15 15"><path d="M.3.3l14.400 14.400M14.700.3.3 14.700" stroke="#000" strokeWidth="1.100" /></svg>
          </WindowButton>
        </WindowControls>
      </TabStrip>

      <Toolbar>
        <NavButtons>
          <NavButton>
            <svg width="20" height="19" viewBox="0 0 20 19"><path d="M20 9.500H2M10.500.8 1.700 9.500l8.800 8.700" {...stroke} /></svg>
          </NavButton>
          <NavButton>
            <svg width="20" height="19" viewBox="0 0 20 19"><path d="M0 9.500h18M9.500.8l8.800 8.700-8.800 8.700" {...stroke} stroke="#bcbec1" /></svg>
          </NavButton>
          <NavButton>
            <svg width="21" height="20" viewBox="0 0 21 20">
              <path d="M18.600 12.500a8.700 8.700 0 1 1-1.800-8.300L19 6.500" {...stroke} />
              <path d="M20.800 0v8.300h-8.300z" fill="#5f6368" />
            </svg>
          </NavButton>
          <NavButton>
            <svg width="21" height="20" viewBox="0 0 21 20"><path d="M1.800 10.500 10.500 1.500l8.700 9h-3V19H4.800v-8.500z" {...stroke} /></svg>
          </NavButton>
        </NavButtons>
        <Omnibox>
          <svg width="13" height="17" viewBox="0 0 13 17">
            <rect y="6" width="13" height="11" rx="1.500" fill="#5f6368" />
            <path d="M3 7V4.300a3.500 3.500 0 0 1 7 0V7" fill="none" stroke="#5f6368" strokeWidth="1.900" />
          </svg>
          <Address><b>github.com</b>/new/import</Address>
          <ToolSlot><Favicon $white><GoogleG w={18} /></Favicon></ToolSlot>
          <ToolSlot>
            <svg width="22" height="20" viewBox="0 0 22 20">
              <path d="M9 1.100H2.500A1.400 1.400 0 0 0 1.100 2.500v11a1.400 1.400 0 0 0 1.400 1.400h17a1.400 1.400 0 0 0 1.400-1.400V11M15 0v10M10.500 6.500l4.500 4.300 4.500-4.300" {...stroke} />
              <path d="M4.500 16h13v4h-13z" fill="#5f6368" />
            </svg>
          </ToolSlot>
          <ToolSlot>
            <svg width="23" height="21" viewBox="0 0 23 21">
              <path d="M1 5v15h17v-3.500M14.500 1l7.500 7-7.500 7v-4Q8 10.500 5.500 15 6 6 14.500 5z" {...stroke} strokeWidth={1.700} />
            </svg>
          </ToolSlot>
          <ToolSlot>
            <svg width="21" height="20" viewBox="0 0 21 20">
              <path d="m10.500 2.200 2.300 5.500 6.300.5-4.800 4.100 1.500 6-5.300-3.200-5.300 3.200 1.500-6-4.800-4.100 6.300-.5z" {...stroke} strokeWidth={2} />
            </svg>
          </ToolSlot>
        </Omnibox>
        <ToolEnd>
          <ToolSlot>
            <svg width="22" height="22" viewBox="1 1 22 22">
              <path fill="#5f6368" d="M20.500 11H19V7c0-1.100-.9-2-2-2h-4V3.500a2.500 2.500 0 0 0-5 0V5H4c-1.100 0-1.990.9-1.990 2v3.800H3.500c1.490 0 2.700 1.210 2.700 2.700s-1.210 2.700-2.700 2.700H2V20c0 1.100.9 2 2 2h3.800v-1.500c0-1.490 1.210-2.700 2.700-2.700s2.700 1.210 2.700 2.700V22H17c1.100 0 2-.9 2-2v-4h1.500a2.500 2.500 0 0 0 0-5z" />
            </svg>
          </ToolSlot>
          <ToolSlot>
            <svg width="24" height="19" viewBox="0 0 24 19">
              <path d="M0 1.500h14M0 8h14M0 14.500h8" {...stroke} />
              <path d="M24 .4v2.300h-4.500V15.500a3.600 3.600 0 1 1-2.200-3.300V.4z" fill="#5f6368" />
            </svg>
          </ToolSlot>
          <ToolSlot>
            <svg width="22" height="22" viewBox="0 0 22 22">
              <path fillRule="evenodd" d="M0 0h22v22H0zM3 3v16h10.500V3z" fill="#5f6368" />
            </svg>
          </ToolSlot>
          <ToolSlot><Avatar>A</Avatar></ToolSlot>
          <ToolSlot>
            <svg width="5" height="20" viewBox="0 0 5 20" fill="#5f6368">
              <circle cx="2.500" cy="2.500" r="2.200" /><circle cx="2.500" cy="10" r="2.200" /><circle cx="2.500" cy="17.500" r="2.200" />
            </svg>
          </ToolSlot>
        </ToolEnd>
      </Toolbar>

      <Bookmarks>
        {bookmarks.map((b) => (
          <Bookmark key={b.text} $w={b.w}>
            <BookmarkIcon>{b.icon}</BookmarkIcon>
            <Label $ls={b.ls}>{b.text}</Label>
          </Bookmark>
        ))}
        <Overflow>
          <svg width="10" height="9" viewBox="0 0 10 9"><path d="M.8.5 4.300 4.500.8 8.500M5.300.5l3.500 4-3.500 4" fill="none" stroke="#4a4d51" strokeWidth="1.700" /></svg>
        </Overflow>
      </Bookmarks>

      <ShareBar>
        <svg width="30" height="20" viewBox="0 0 30 20">
          <path d="M4 0h22a1.500 1.500 0 0 1 1.500 1.500V18H30v2H0v-2h2.500V1.500A1.500 1.500 0 0 1 4 0z" fill="#1a73e8" />
          <path d="M9 13.500q.8-6 7-6.700V4l5 4.700-5 4.700v-2.800q-4.500 0-7 2.900z" fill="#fff" />
        </svg>
        <ShareText><Label $ls={-0.22}>Sharing https://deloittedevelopment.udemy.com to meet.google.com</Label></ShareText>
        <ShareButton $w={152} $solid><Label $ls={-0.06}>Stop sharing</Label></ShareButton>
        <ShareButton $w={225}><Label $ls={-0.18}>Share this tab instead</Label></ShareButton>
      </ShareBar>

      <Viewport>
        <Page>
          <Form>
            <Field $w={1056}><Label $ls={-0.09}>https://github.com/rahulshettyacademy/DevopsBasics.git</Label></Field>
            <Section $h={62} $top={8}>
              <Label $ls={-0.06}>Learn more about the types of <Link>supported VCS</Link>.</Label>
            </Section>
            <Section $h={210} $top={28}>
              <Heading><Label $ls={-0.55}>Your new repository details</Label></Heading>
              <FieldRow>
                <FieldGroup $w={349}>
                  <FieldLabel><Label $ls={-0.4}>Owner<Star> *</Star></Label></FieldLabel>
                  <OwnerButton>
                    <Identicon />
                    <OwnerName>AbhishekAutomationHbz</OwnerName>
                    <svg width="12" height="7" viewBox="0 0 12 7"><path d="M0 0h12L6 6.700z" fill="#24292f" /></svg>
                  </OwnerButton>
                </FieldGroup>
                <Slash>
                  <svg width="15" height="30" viewBox="0 0 15 30"><path d="M14 .5 1 29.500" stroke="#1f2328" strokeWidth="2" /></svg>
                </Slash>
                <FieldGroup $w={300}>
                  <FieldLabel><Label $ls={-0.25}>Repository name<Star> *</Star></Label></FieldLabel>
                  <Field $w={282} $focus><Misspelled $ls={-0.14}>ProjectForDevops</Misspelled></Field>
                  <Available><CheckIcon /><Label $ls={-0.21}>ProjectForDevops is available.</Label></Available>
                </FieldGroup>
              </FieldRow>
            </Section>
            <Section $h={166} $top={28}>
              <Option $h={71}>
                <Radio $on />
                <OptionIcon $top={6}><RepoIcon /></OptionIcon>
                <OptionText $up={1}>
                  <OptionName><Label $ls={-0.26}>Public</Label></OptionName>
                  <OptionNote><Label $ls={-0.14}>Anyone on the internet can see this repository. You choose who can commit.</Label></OptionNote>
                </OptionText>
              </Option>
              <Option $h={60}>
                <Radio />
                <OptionIcon $top={5}><LockIcon /></OptionIcon>
                <OptionText $up={2}>
                  <OptionName><Label $ls={-0.46}>Private</Label></OptionName>
                  <OptionNote><Label $ls={-0.14}>You choose who can see and commit to this repository.</Label></OptionNote>
                </OptionText>
              </Option>
            </Section>
            <Section $h={80} $top={23}>
              <Notice><InfoIcon /><Label $ls={-0.09}>You are creating a public repository in your personal account.</Label></Notice>
            </Section>
            <Actions>
              <Cancel><Label $ls={-0.17}>Cancel</Label></Cancel>
              <Submit>Begin import</Submit>
            </Actions>
          </Form>
          <Footer>
            <GitHub w={36} color="#6e7781" />
            <Copyright><Label $ls={-0.2}>© 2023 GitHub, Inc.</Label></Copyright>
            {footerLinks.map(([text, w, ls]) => (
              <FooterLink key={text} $w={w}><Label $ls={ls}>{text}</Label></FooterLink>
            ))}
          </Footer>
        </Page>
        <Scrollbar>
          <ScrollArrow>
            <svg width="11" height="6" viewBox="0 0 11 6"><path d="M0 6h11L5.500 0z" fill="#505050" /></svg>
          </ScrollArrow>
          <ScrollTrack><ScrollThumb /></ScrollTrack>
          <ScrollArrow $down>
            <svg width="11" height="6" viewBox="0 0 11 6"><path d="M0 6h11L5.500 0z" fill="#505050" /></svg>
          </ScrollArrow>
        </Scrollbar>
      </Viewport>

      <Taskbar>
        <TaskSlot $w={72}><Windows /></TaskSlot>
        <TaskSlot $w={71}><Search /></TaskSlot>
        <TaskSlot $w={76}><TaskView /></TaskSlot>
        {apps.map((a, i) => (
          <TaskSlot key={i} $w={a.w} $bar={a.bar} $active={a.active}>{a.icon}</TaskSlot>
        ))}
        <Tray>
          <Weather />
          <Temperature><Label $ls={-0.4}>28°C</Label></Temperature>
          <TraySlot $w={12} />
          {trayIcons.map(([w, icon], i) => (
            <TraySlot key={i} $w={w}>{icon}</TraySlot>
          ))}
          <Language><Label $ls={-0.6}>ENG</Label></Language>
          <Clock>
            <div><Label $ls={-0.22}>22:55</Label></div>
            <div><Label $ls={0.18}>07-08-2023</Label></div>
          </Clock>
          <TraySlot $w={75} $top={13}><Notifications /></TraySlot>
          <ShowDesktop />
        </Tray>
      </Taskbar>
    </Screen>
  );
}
